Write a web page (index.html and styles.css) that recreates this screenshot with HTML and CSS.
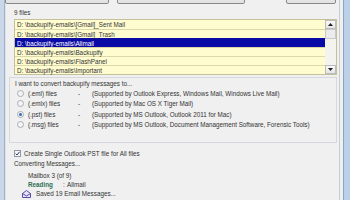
FILE: index.html
```html
<!DOCTYPE html>
<html>
<head>
<meta charset="utf-8">
<link rel="stylesheet" href="styles.css">
</head>
<body>
<div class="window">
  <div class="frame-left"></div>
  <div class="content">
    <div class="buttons">
      <div class="btn btn1"></div>
      <div class="btn btn2"></div>
      <div class="btn btn3"></div>
    </div>
    <div class="count">9 files</div>
    <div class="list">
      <div class="rows">
        <div class="row">D: \backupify-emails\[Gmail]_Sent Mail</div>
        <div class="row">D: \backupify-emails\[Gmail]_Trash</div>
        <div class="row selected">D: \backupify-emails\Allmail</div>
        <div class="row">D: \backupify-emails\Backupify</div>
        <div class="row">D: \backupify-emails\FlashPanel</div>
        <div class="row">D: \backupify-emails\Important</div>
      </div>
      <div class="scrollbar">
        <div class="sb-btn"><svg width="5" height="3" viewBox="0 0 5 3"><path d="M0 3 L2.5 0 L5 3 Z" fill="#222"/></svg></div>
        <div class="sb-thumb"></div>
        <div class="sb-track"></div>
        <div class="sb-btn"><svg width="5" height="3" viewBox="0 0 5 3"><path d="M0 0 L2.5 3 L5 0 Z" fill="#222"/></svg></div>
      </div>
    </div>
    <div class="group">
      <div class="intro">I want to convert backupify messages to...</div>
      <div class="opt"><span class="radio"></span><span class="ext">(.eml) files</span><span class="dash">-</span><span class="desc">(Supported by Outlook Express, Windows Mail, Windows Live Mail)</span></div>
      <div class="opt"><span class="radio"></span><span class="ext">(.emlx) files</span><span class="dash">-</span><span class="desc">(Supported by Mac OS X Tiger Mail)</span></div>
      <div class="opt"><span class="radio on"></span><span class="ext">(.pst) files</span><span class="dash">-</span><span class="desc">(Supported by MS Outlook, Outlook 2011 for Mac)</span></div>
      <div class="opt"><span class="radio"></span><span class="ext">(.msg) files</span><span class="dash">-</span><span class="desc">(Supported by MS Outlook, Document Management Software, Forensic Tools)</span></div>
    </div>
    <div class="check"><span class="box"><svg width="5" height="5" viewBox="0 0 5 5"><path d="M0.6 2.6 L2 4 L4.5 0.8" fill="none" stroke="#2a3a6a" stroke-width="1"/></svg></span>Create Single Outlook PST file for All files</div>
    <div class="status">Converting Messages...</div>
    <div class="progress">
      <div class="line">Mailbox 3 (of 9)</div>
      <div class="line"><span class="reading">Reading</span><span class="colon">:</span>Allmail</div>
      <div class="line saved"><svg class="env" width="9" height="8" viewBox="0 0 9 8"><path d="M0.5 3.5 L4.5 0.5 L8.5 3.5 L8.5 7.5 L0.5 7.5 Z" fill="#e8e4f4" stroke="#5a4aa8" stroke-width="1"/><path d="M0.5 3.5 L4.5 6 L8.5 3.5" fill="none" stroke="#5a4aa8" stroke-width="1"/></svg>Saved 19 Email Messages...</div>
    </div>
  </div>
  <div class="gap"></div>
  <div class="frame-right"></div>
</div>
</body>
</html>
```

FILE: styles.css
```css
html, body {
  margin: 0;
  padding: 0;
}
body {
  width: 350px;
  height: 200px;
  overflow: hidden;
  background: #f0f0f0;
  font-family: "Liberation Sans", Arial, sans-serif;
  font-size: 6.3px;
  color: #333;
}
.window {
  display: flex;
  height: 200px;
}
.frame-left {
  width: 4px;
  background: #c9d7e8;
  border-right: 1px solid #9fb3ca;
}
.content {
  width: 334px;
  border-left: 1px solid #dfe3e8;
  border-right: 1px solid #c9ccd0;
  display: flex;
  flex-direction: column;
}
.gap {
  width: 3px;
}
.frame-right {
  width: 6px;
  background: #bcd0e8;
  border-left: 1px solid #8aa4c4;
}
.buttons {
  display: flex;
  height: 22px;
  margin-top: -18px;
}
.btn {
  height: 20px;
  border: 1px solid #8a8a8a;
  border-radius: 2px;
  background: linear-gradient(#f2f2f2, #e2e2e2);
}
.btn1 { width: 102px; margin-left: -1px; }
.btn2 { width: 126px; margin-left: 8px; }
.btn3 { width: 48px; margin-left: 41px; }
.count {
  margin: 4px 0 0 8px;
  line-height: 9px;
}
.list {
  display: flex;
  margin: 2px 2px 0 8px;
  border: 1px solid #c4c09a;
  background: #fffdd0;
}
.rows {
  flex: 1;
}
.row {
  height: 9px;
  line-height: 9px;
  padding-left: 2px;
  border-top: 1px solid #ddd8aa;
  box-sizing: border-box;
  white-space: nowrap;
  color: #333;
}
.row:first-child {
  border-top: none;
}
.row.selected {
  background: #0a0aa6;
  color: #fff;
  border-top-color: #0a0aa6;
}
.scrollbar {
  width: 11px;
  display: flex;
  flex-direction: column;
  background: #f4f3ee;
}
.sb-btn {
  height: 9px;
  box-sizing: border-box;
  border: 1px solid #bbb;
  background: linear-gradient(#fafafa, #e6e6e6);
  display: flex;
  align-items: center;
  justify-content: center;
}
.sb-thumb {
  height: 10px;
  box-sizing: border-box;
  border: 1px solid #c8c8c8;
  background: #ececec;
}
.sb-track {
  flex: 1;
}
.group {
  margin: 2px 2px 0 3px;
  border: 1px solid #d5d9dd;
  padding: 1px 0 12px 5px;
}
.intro {
  line-height: 9px;
}
.opt {
  display: flex;
  align-items: center;
  height: 10.5px;
  white-space: nowrap;
}
.radio {
  width: 5px;
  height: 5px;
  border: 1px solid #a8aeb8;
  border-radius: 50%;
  background: #f4f4f4;
  margin: 0 4px 0 2px;
  position: relative;
}
.radio.on::after {
  content: "";
  position: absolute;
  left: 1px;
  top: 1px;
  width: 3px;
  height: 3px;
  border-radius: 50%;
  background: #3a68b8;
}
.ext {
  width: 50px;
}
.dash {
  width: 14px;
}
.check {
  display: flex;
  align-items: center;
  margin: 6px 0 0 8px;
  line-height: 9px;
}
.box {
  width: 5px;
  height: 5px;
  border: 1px solid #8e98a8;
  background: #f8f8f8;
  margin-right: 3px;
  display: flex;
}
.status {
  margin: 1px 0 0 8px;
  line-height: 9px;
}
.progress {
  margin: 3px 0 0 22px;
}
.line {
  line-height: 9px;
  display: flex;
  align-items: center;
}
.reading {
  font-weight: bold;
  color: #2e7256;
  width: 35px;
}
.colon {
  width: 4px;
}
.saved {
  margin-left: -6px;
}
.env {
  margin-right: 5px;
}
```
